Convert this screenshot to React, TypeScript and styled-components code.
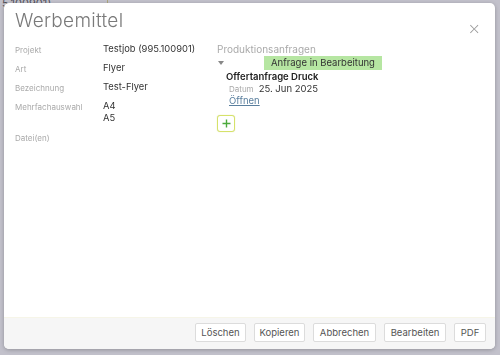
import styled, { createGlobalStyle } from "styled-components";

const GlobalStyle = createGlobalStyle`
    html, body {
        margin: 0;
        padding: 0;
        width: 500px;
        height: 355px;
        overflow: hidden;
        background: #ffffff;
        font-family: Inter, "Noto Sans", sans-serif;
    }
`;

// the page that sits behind the dialog
const BackPage = styled.div`
    height: 355px;
    padding: 0 0 0 2px;
    font-size: 11px;
    color: #333;
`;

const BackRow = styled.div`
    display: flex;
    gap: 56px;
    line-height: 6px;
`;

const BackMark = styled.span`
    width: 1px;
    height: 6px;
    background: #d8d070;
`;

const Overlay = styled.div`
    position: fixed;
    inset: 0;
    background: rgba(120, 118, 140, 0.45);
    padding: 3px 5px 6px 4px;
    display: flex;
`;

const Dialog = styled.div`
    flex: 1;
    display: flex;
    flex-direction: column;
    background: #fff;
    border-radius: 5px;
    box-shadow: 0 1px 4px rgba(0, 0, 0, 0.25);
    overflow: hidden;
`;

const Header = styled.div`
    display: flex;
    justify-content: space-between;
    align-items: flex-start;
    padding: 6px 14px 0 11px;
`;

const Title = styled.h1`
    margin: 0;
    font-size: 19px;
    font-weight: 300;
    color: #7a7a7a;
    letter-spacing: 0.3px;
`;

const Close = styled.button`
    border: 0;
    background: none;
    padding: 0;
    margin-top: 12px;
    font-size: 16px;
    line-height: 1;
    color: #999;
    font-family: "DejaVu Sans", sans-serif;
    font-weight: 200;
`;

const Body = styled.div`
    flex: 1;
    display: grid;
    grid-template-columns: 202px 1fr;
    padding: 6px 11px 0;
`;

const Fields = styled.div`
    display: grid;
    grid-template-columns: 88px 1fr;
    row-gap: 7px;
    align-content: start;
`;

const Label = styled.div`
    font-size: 8px;
    color: #aaa;
    padding-top: 2px;
`;

const Value = styled.div`
    font-size: 9.4px;
    color: #333;
    line-height: 12px;
`;

const Spacer = styled.div<{ $h: number }>`
    height: ${(p) => p.$h}px;
`;

const Requests = styled.div`
    display: flex;
    flex-direction: column;
    align-items: flex-start;
`;

const SectionTitle = styled.div`
    font-size: 10px;
    color: #aaa;
    line-height: 12px;
`;

const BadgeRow = styled.div`
    display: flex;
    align-items: center;
    gap: 40px;
    margin-top: 1px;
`;

const Caret = styled.span`
    width: 0;
    height: 0;
    border-left: 3.5px solid transparent;
    border-right: 3.5px solid transparent;
    border-top: 4px solid #888;
    margin-left: 1px;
`;

const Badge = styled.span`
    background: #b6e6a2;
    color: #333;
    font-size: 9.5px;
    padding: 1px 7px 1px 7px;
    line-height: 12px;
`;

const Request = styled.div`
    padding-left: 9px;
    display: flex;
    flex-direction: column;
`;

const RequestTitle = styled.div`
    font-size: 9.5px;
    font-weight: 600;
    color: #222;
    line-height: 13px;
`;

const DateRow = styled.div`
    display: flex;
    align-items: baseline;
    gap: 5px;
    padding-left: 3px;
    line-height: 12px;
`;

const SmallLabel = styled.span`
    font-size: 8px;
    color: #aaa;
`;

const DateValue = styled.span`
    font-size: 9.5px;
    color: #333;
`;

const Link = styled.a`
    font-size: 9.5px;
    color: #5a7f9e;
    text-decoration: underline;
    padding-left: 3px;
    line-height: 11px;
    cursor: pointer;
`;

const AddButton = styled.button`
    margin-top: 9px;
    width: 18px;
    height: 17px;
    padding: 0;
    border: 1px solid #d6e26a;
    border-radius: 3px;
    background: #fff;
    display: flex;
    align-items: center;
    justify-content: center;
    box-shadow: 0 0 1px rgba(190, 200, 80, 0.6);
`;

const Footer = styled.div`
    display: flex;
    justify-content: flex-end;
    gap: 8px;
    padding: 5px 9px 7px;
    background: #f6f6f6;
    border-top: 1px solid #f6f5e8;
`;

const FooterButton = styled.button<{ $w: number }>`
    background: #fff;
    border: 1px solid #dcdcdc;
    border-radius: 2px;
    height: 19px;
    width: ${(p) => p.$w}px;
    padding: 0;
    font-family: Inter, "Noto Sans", sans-serif;
    font-size: 9.5px;
    color: #555;
`;

const fields: { label: string; values: string[] }[] = [
    { label: "Projekt", values: ["Testjob (995.100901)"] },
    { label: "Art", values: ["Flyer"] },
    { label: "Bezeichnung", values: ["Test-Flyer"] },
    { label: "Mehrfachauswahl", values: ["A4", "A5"] },
];

const buttons: [string, number][] = [
    ["Löschen", 51],
    ["Kopieren", 51],
    ["Abbrechen", 63],
    ["Bearbeiten", 62],
    ["PDF", 32],
];

export default function App() {
    return (
        <>
            <GlobalStyle />
            <BackPage>
                <BackRow>
                    <span>5.100901)</span>
                    <BackMark />
                </BackRow>
            </BackPage>
            <Overlay>
                <Dialog>
                    <Header>
                        <Title>Werbemittel</Title>
                        <Close aria-label="Schliessen">×</Close>
                    </Header>
                    <Body>
                        <Fields>
                            {fields.map((f) => (
                                <>
                                    <Label key={f.label}>{f.label}</Label>
                                    <Value>
                                        {f.values.map((v) => (
                                            <div key={v}>{v}</div>
                                        ))}
                                    </Value>
                                </>
                            ))}
                            <Label>Datei(en)</Label>
                            <Spacer $h={10} />
                        </Fields>
                        <Requests>
                            <SectionTitle>Produktionsanfragen</SectionTitle>
                            <BadgeRow>
                                <Caret />
                                <Badge>Anfrage in Bearbeitung</Badge>
                            </BadgeRow>
                            <Request>
                                <RequestTitle>Offertanfrage Druck</RequestTitle>
                                <DateRow>
                                    <SmallLabel>Datum</SmallLabel>
                                    <DateValue>25. Jun 2025</DateValue>
                                </DateRow>
                                <Link>Öffnen</Link>
                            </Request>
                            <AddButton aria-label="Hinzufügen">
                                <svg width="9" height="9" viewBox="0 0 9 9">
                                    <path d="M4.5 0.5v8M0.5 4.5h8" stroke="#4caa3c" strokeWidth="1.4" />
                                </svg>
                            </AddButton>
                        </Requests>
                    </Body>
                    <Footer>
                        {buttons.map(([b, w]) => (
                            <FooterButton key={b} $w={w}>{b}</FooterButton>
                        ))}
                    </Footer>
                </Dialog>
            </Overlay>
        </>
    );
}
